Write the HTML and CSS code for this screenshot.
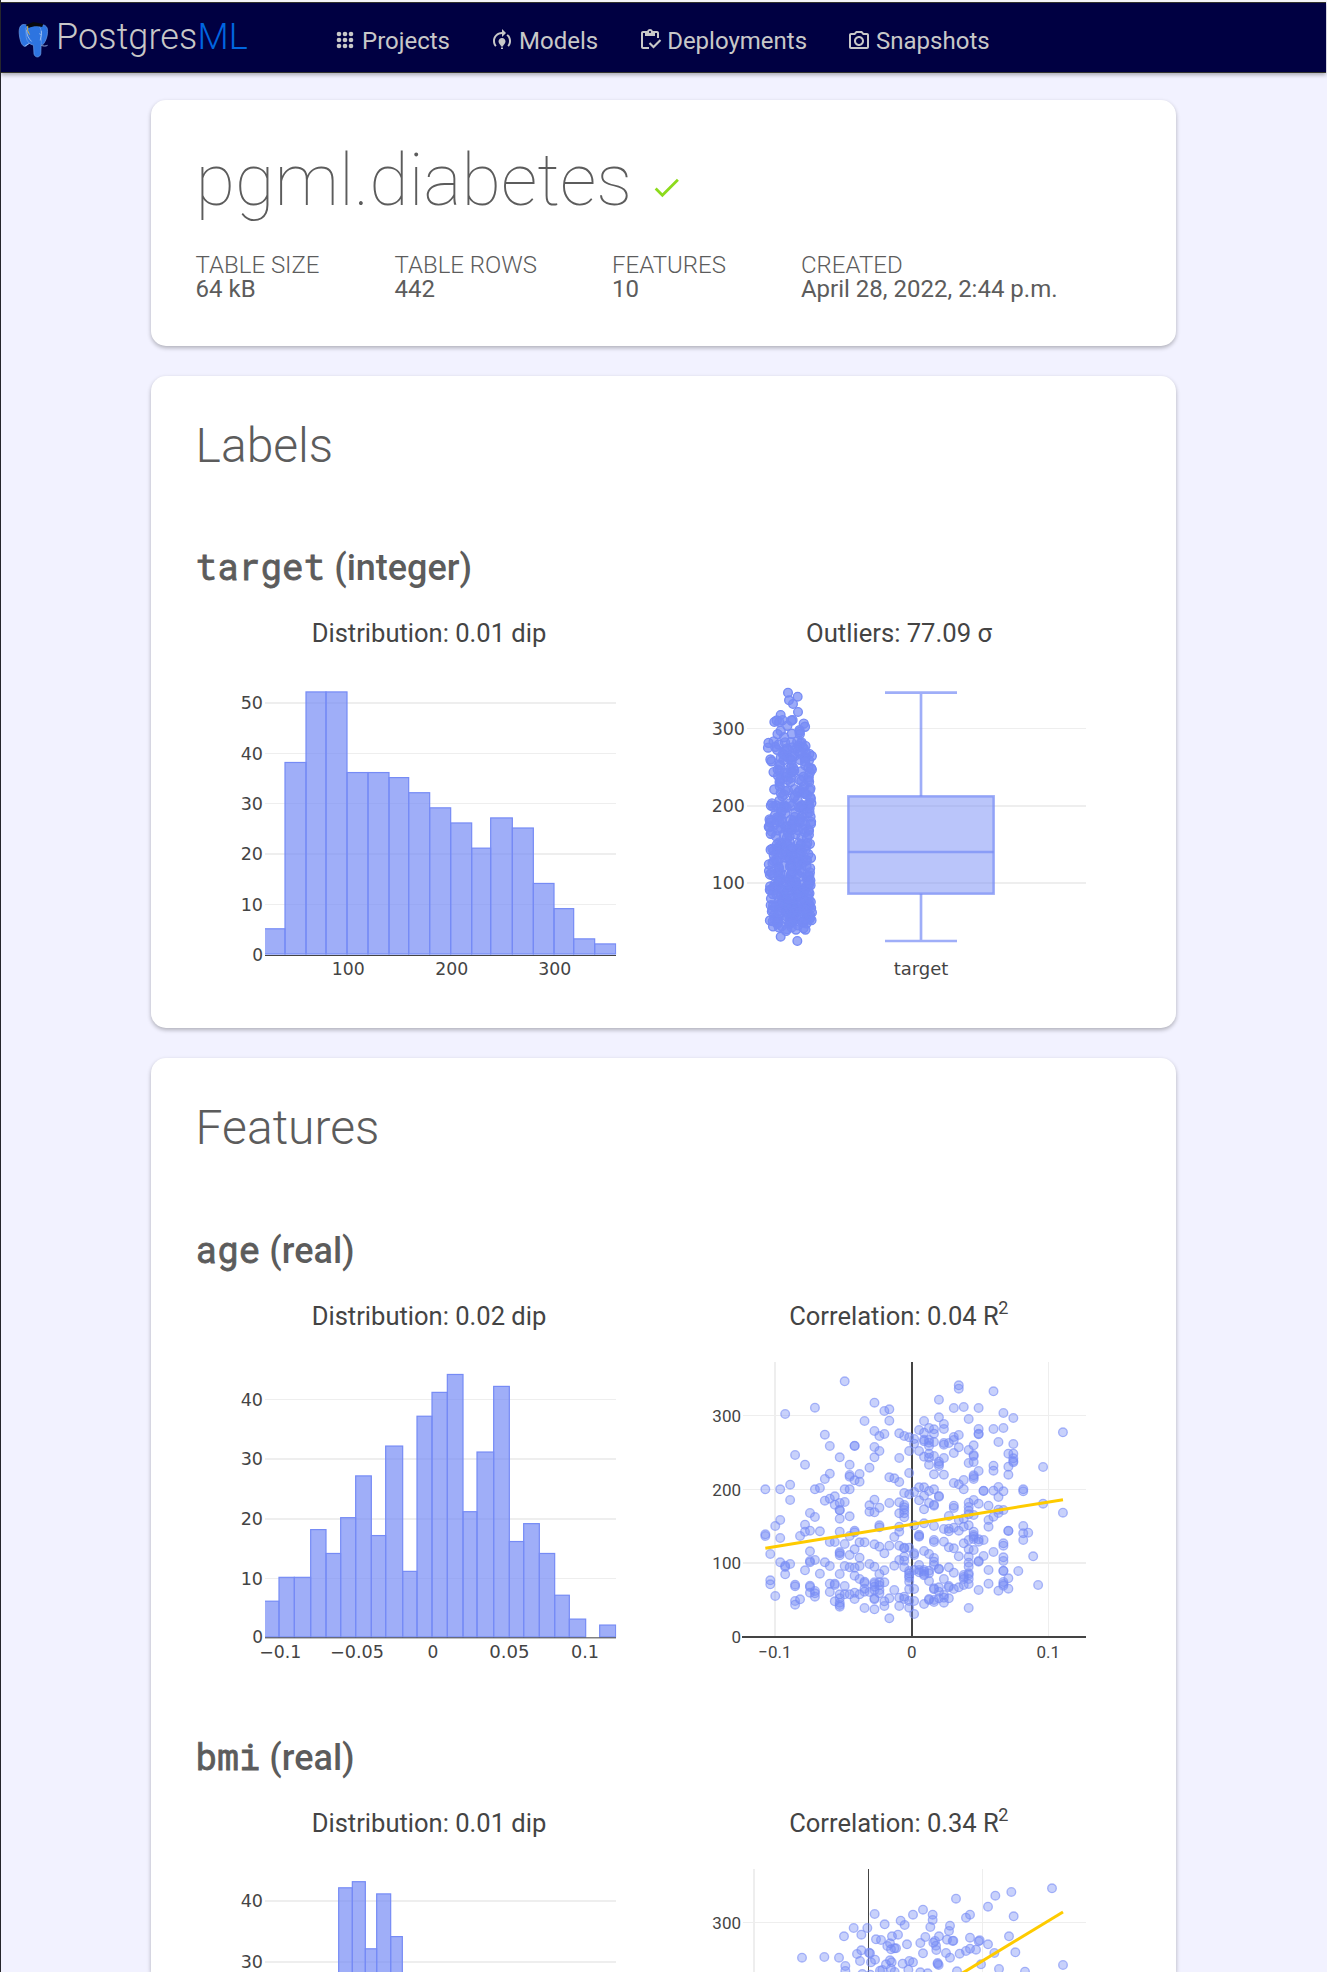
FILE: index.html
```html
<!DOCTYPE html>
<html lang="en">
<head>
<meta charset="utf-8">
<title>pgml.diabetes – PostgresML</title>
<link rel="stylesheet" href="styles.css">
</head>
<body>
<header class="navbar">
  <a class="brand">
    <svg class="brand-logo" viewBox="0 0 32 38">
      <path class="ear" d="M9 4C3 2 1 6 1.200 12c.4 6 2 13 5.300 14 2 .6 4-2 5-4l2-13z"/>
      <path class="ear" d="M22 4c5-1 9 1 8.500 7 0 5-2 10-4.500 13-2 1-4-2-5-5z"/>
      <path class="head" d="M8 7c3-3 12-4 15 0 2 4 1 10 1 15l-.5 12c-1 4-6 4-7 0l-.5-9c-4-1-7-4-7.500-8z"/>
      <path class="outline" d="M24 25c2 1 5 1 6.500 0M12 23c-2 1-4 2-5 3M9 9c0 6 2 9 5 12M24 10c1 4-1 6-1 10M22 13l2 1"/>
      <path class="cap" d="M8 4l8-3 10 2-1 3c-4-1-10-1-14 1z"/>
      <path class="tassel" d="M10 5v5l2 4"/>
    </svg>
    <span class="brand-name">Postgres<span class="brand-ml">ML</span></span>
  </a>
  <nav class="menu">
    <a class="menu-item"><svg class="icon" viewBox="0 0 24 24"><g><circle cx="6" cy="6" r="2.300"/><circle cx="12" cy="6" r="2.300"/><circle cx="18" cy="6" r="2.300"/><circle cx="6" cy="12" r="2.300"/><circle cx="12" cy="12" r="2.300"/><circle cx="18" cy="12" r="2.300"/><circle cx="6" cy="18" r="2.300"/><circle cx="12" cy="18" r="2.300"/><circle cx="18" cy="18" r="2.300"/></g></svg><span>Projects</span></a>
    <a class="menu-item"><svg class="icon" viewBox="0 0 24 24"><path d="M15.500 13.500c0 2-2.500 3.500-2.500 5h-2c0-1.500-2.500-3-2.500-5 0-1.930 1.570-3.500 3.500-3.500s3.500 1.570 3.500 3.500zM13 19.500h-2V21h2zM19 13c0 1.680-.59 3.230-1.580 4.450l1.420 1.420C20.180 17.270 21 15.230 21 13c0-2.740-1.230-5.190-3.160-6.840l-1.420 1.420C17.990 8.860 19 10.820 19 13zM16 5l-4-4v3c-4.970 0-9 4.030-9 9 0 2.230.82 4.270 2.160 5.870l1.420-1.420C5.590 16.230 5 14.680 5 13c0-3.860 3.140-7 7-7v3z"/></svg><span>Models</span></a>
    <a class="menu-item"><svg class="icon" viewBox="0 0 24 24"><path d="M5 5h2v3h10V5h2v5h2V5c0-1.100-.9-2-2-2h-4.180C14.400 1.840 13.300 1 12 1S9.600 1.840 9.180 3H5c-1.100 0-2 .9-2 2v14c0 1.100.9 2 2 2h6v-2H5zm7-2c.55 0 1 .45 1 1s-.45 1-1 1-1-.45-1-1 .45-1 1-1z"/><path d="M21.750 11.250L15.510 17.500l-3.260-3.250-1.500 1.510 4.760 4.740 7.740-7.740z"/></svg><span>Deployments</span></a>
    <a class="menu-item"><svg class="icon" viewBox="0 -1 24 24"><path d="M14.120 4l1.830 2H20v12H4V6h4.050l1.830-2h4.240M15 2H9L7.170 4H4c-1.100 0-2 .9-2 2v12c0 1.100.9 2 2 2h16c1.100 0 2-.9 2-2V6c0-1.100-.9-2-2-2h-3.170L15 2zm-3 7c1.650 0 3 1.350 3 3s-1.350 3-3 3-3-1.350-3-3 1.350-3 3-3m0-2c-2.760 0-5 2.240-5 5s2.240 5 5 5 5-2.240 5-5-2.240-5-5-5z"/></svg><span>Snapshots</span></a>
  </nav>
</header>
<main class="page">
  <section class="card summary">
    <h1 class="title"><span>pgml.diabetes</span><svg class="status" viewBox="0 0 24 24"><path d="M9 16.170L4.830 12l-1.420 1.410L9 19 21 7l-1.410-1.410z"/></svg></h1>
    <dl class="stats">
      <div><dt>TABLE SIZE</dt><dd>64 kB</dd></div>
      <div><dt>TABLE ROWS</dt><dd>442</dd></div>
      <div><dt>FEATURES</dt><dd>10</dd></div>
      <div><dt>CREATED</dt><dd>April 28, 2022, 2:44 p.m.</dd></div>
    </dl>
  </section>
  <section class="card labels">
    <h2>Labels</h2>
    <article class="column-block">
      <h3><code>target</code> (integer)</h3>
      <div class="charts">
        <svg class="chart" id="target-hist"></svg>
        <svg class="chart" id="target-box"></svg>
      </div>
    </article>
  </section>
  <section class="card features">
    <h2>Features</h2>
    <article class="column-block">
      <h3><code>age</code> (real)</h3>
      <div class="charts">
        <svg class="chart" id="age-hist"></svg>
        <svg class="chart" id="age-scatter"></svg>
      </div>
    </article>
    <article class="column-block">
      <h3><code>bmi</code> (real)</h3>
      <div class="charts">
        <svg class="chart" id="bmi-hist"></svg>
        <svg class="chart" id="bmi-scatter"></svg>
      </div>
    </article>
  </section>
</main>
<script src="charts.js"></script>
</body>
</html>
```
FILE: styles.css
```css
* { box-sizing: border-box; }
body {
  margin: 0;
  height: 1972px;
  overflow: hidden;
  background: #f2f2ff;
  border-left: 1px solid #26262c;
  font-family: Roboto, "Liberation Sans", sans-serif;
  color: #5c5c5c;
}
.navbar {
  display: flex;
  height: 71px;
  margin: 2px 1px 0 0;
  background: #000042;
  border-top: 1px solid #33332e;
  border-bottom: 1px solid #33332e;
  box-shadow: 0 -2px 0 #f4f4f8, 0 2px 4px rgba(0, 0, 0, .3);
  color: #c8c8c8;
}
.brand { display: flex; padding: 18px 0 0 17px; width: 332px; }
.brand-logo { width: 31px; height: 37px; margin-right: 7px; }
.ear, .head { fill: #2d74e0; stroke: #6e9fe8; stroke-width: .7; }
.outline { fill: none; stroke: #a4c2f0; stroke-width: .9; }
.cap { fill: #08080c; }
.tassel { fill: none; stroke: #d8b040; stroke-width: 1; }
.brand-name { font-size: 36px; font-weight: 300; line-height: 42px; margin-top: -5px; letter-spacing: .1px; }
.brand-ml { color: #0066e0; }
.menu { display: flex; gap: 40px; padding-top: 24px; }
.menu-item { display: flex; gap: 5px; font-size: 24px; line-height: 28px; }
.icon { width: 24px; height: 24px; margin-top: 1px; fill: currentColor; }
.page { display: flex; flex-direction: column; gap: 30px; width: 1025px; margin: 27px 0 0 150px; }
.card { background: #fff; border-radius: 15px; padding: 0 46px 0 44px; box-shadow: 0 2px 4px rgba(0, 0, 0, .28); }
.summary { height: 246px; }
.labels { height: 652px; }
.features { height: 914px; overflow: hidden; border-radius: 15px 15px 0 0; }
h1, h2, h3, dl, dd { margin: 0; font-weight: 400; }
h1, h2, h3, .stats { padding-left: .6px; }
.title { display: flex; font-size: 72px; font-weight: 100; line-height: 84px; padding-top: 39px; height: 139px; }
.status { width: 33px; height: 33px; margin: 32px 0 0 18px; fill: #8ddb1c; }
.stats { display: flex; gap: 75px; padding-top: 14px; font-size: 24px; line-height: 24px; }
dt { font-weight: 300; }
h2 { font-size: 48px; font-weight: 300; line-height: 56px; padding-top: 42px; height: 98px; }
.column-block { height: 507px; padding-top: 73px; }
.features .column-block { padding-top: 74px; }
h3 { font-size: 36px; font-weight: 500; line-height: 42px; height: 59px; white-space: pre; }
.features h3 { height: 58px; }
h3 code { font-family: "Roboto Mono", "DejaVu Sans Mono", monospace; font-size: 36px; font-weight: 400; line-height: 30px; -webkit-text-stroke: .8px #5c5c5c; }
.charts { display: grid; grid-template-columns: 467px 468px; }
.chart { display: block; width: 467px; height: 384px; overflow: hidden; }

.heading { font: 78px Roboto, sans-serif; fill: #444; text-anchor: middle; }
.tick { font: 51px "DejaVu Sans", sans-serif; fill: #444; }
.tick.plain { font: 51px Roboto, sans-serif; }
.grid { fill: #eee; }
.zero { fill: #444; }
.bar { fill: #768bf5; fill-opacity: .7; stroke: #768bf5; stroke-width: 3.600; }
.dot { fill: #768bf5; fill-opacity: .4; stroke: #768bf5; stroke-opacity: .6; stroke-width: 4; }
.jitter { fill: #768bf5; fill-opacity: .72; stroke: #768bf5; stroke-width: 4; }
.box { fill: #768bf5; fill-opacity: .5; stroke: #768bf5; stroke-opacity: .7; stroke-width: 7.500; }
.whisker { fill: none; stroke: #768bf5; stroke-opacity: .7; stroke-width: 8; }
.trend { stroke: #fecb00; stroke-width: 9; }
```
FILE: charts.js
```js
// Charts are drawn on a grid of thirds of a pixel.
const tag = (name, cls, attrs, text = '') =>
  `<${name} class="${cls}" ${Object.entries(attrs).map(([k, v]) => `${k}="${v}"`).join(' ')}>${text}</${name}>`;
const rect = (cls, x1, y1, x2, y2) => tag('rect', cls, { x: x1, y: y1, width: x2 - x1, height: y2 - y1 });
const text = (cls, x, y, label, anchor, length) =>
  tag('text', cls, Object.assign({ x, y, 'text-anchor': anchor }, length ? { textLength: length, lengthAdjust: 'spacingAndGlyphs' } : {}), label);
const circle = (cls, x, y, r) => tag('circle', cls, { cx: x, cy: y, r });

function draw(id, dx, dy, parts) {
  document.getElementById(id).innerHTML =
    `<g transform="translate(${dx} ${dy}) scale(${1 / 3})">${parts.join('')}</g>`;
}

function histogram(id, dy, o) {
  const parts = [text('heading', 747, o.headingY, o.heading, 'middle', 704)];
  o.grid.forEach(([v, y, h]) => {
    parts.push(rect('grid', 255, y - h / 2, 1308, y + h / 2));
    parts.push(text('tick', 249, y + 18, v, 'end', 67));
  });
  let bars = '';
  o.bars.forEach((v, i) => {
    if (v) bars += rect('bar', o.edges[i], o.base - v * o.unit, o.edges[i + 1], o.base);
  });
  parts.push(`<clipPath id="${id}-clip"><rect x="255" y="400" width="1054" height="1000"/></clipPath>`);
  parts.push(`<g clip-path="url(#${id}-clip)">${bars}</g>`);
  if (o.axis) {
    parts.push(rect('zero', 255, o.axis, 1308, o.axis + 3));
    parts.push(text('tick', 249, o.axis + 18, '0', 'end'));
  }
  (o.ticks || []).forEach(([x, label, w]) => parts.push(text('tick', x, o.tickY, label, 'middle', w)));
  draw(id, -15, dy, parts);
}

histogram('target-hist', -76, {
  heading: 'Distribution: 0.01 dip', headingY: 335,
  grid: [[50, 519, 6], [40, 670.5, 3], [30, 820.5, 3], [20, 972, 6], [10, 1123.5, 3]],
  edges: [253, 315, 378, 438, 501, 564, 627, 686, 749, 812, 875, 932, 997, 1060, 1122, 1181, 1244, 1307],
  bars: [5, 38, 52, 52, 36, 36, 35, 32, 29, 26, 21, 27, 25, 14, 9, 3, 2],
  base: 1272, unit: 15.12, axis: 1275, tickY: 1334,
  ticks: [[505, '100', 99], [815, '200', 99], [1124, '300', 99]]
});

histogram('age-hist', -78, {
  heading: 'Distribution: 0.02 dip', headingY: 345,
  grid: [[40, 568.5, 3], [30, 747, 6], [20, 927, 6], [10, 1105.5, 3]],
  edges: [253, 297, 343, 392, 438, 482, 527, 574, 617, 668, 711, 756, 802, 849, 891, 941, 988, 1031, 1078, 1124, 1168, 1217, 1259, 1307],
  bars: [6, 10, 10, 18, 14, 20, 27, 17, 32, 11, 37, 41, 44, 21, 31, 42, 16, 19, 14, 7, 3, 0, 2],
  base: 1281, unit: 17.9, axis: 1282, tickY: 1344,
  ticks: [[301, '−0.1', 126], [531, '−0.05', 162], [759, '0'], [988, '0.05', 121], [1215, '0.1', 84]]
});

histogram('bmi-hist', -85, {
  heading: 'Distribution: 0.01 dip', headingY: 365,
  grid: [[40, 573, 6], [30, 756, 6]],
  edges: [476, 517, 556, 590, 632, 667],
  bars: [42, 43, 32, 41, 34],
  base: 1302, unit: 18.3
});

// One row per age: vertical positions of the patients of that age.
const byAge = [
  [628,763,768],[822,901,913],[738,948],[628,720,774,847],[402,857,861,883],[614,660,852],
  [525,914,919,963,974],[768,958],[554,734,755,871],[699,752,814,843,847,917,921,938],
  [383,628,711,840,933,940,950],[624,754,881],[464,597,662,847],[498,581,656,786,858,911,936],
  [649,674,786,911,915,964],[532,669,690,691,716,755,816,820,826,882,943,955,968,975,980],
  [304,628,666,792,858,918,943],[554,585,590,628,709,768,825,862,943],
  [497,498,601,752,757,808,863,887,938,957],[582,605,787,833,858,897,943],
  [423,787,905,909,926,935,984],[563,676,695,852,936],
  [368,453,501,532,659,697,793,860,907,912,920,930,955,958,988],
  [468,513,683,736,742,800,882,907,916,930,940],[393,462,820,871,907,964,978],
  [388,422,592,669,797,955,1015],[595,771,857,930],[460,534,606,667,700,740,755,797,840,953,978],
  [468,639,675,682,690,700,712,805,803,830,842,862,950,957],
  [472,513,579,643,803,873,880,888,893,905,927,963,983],
  [477,491,636,736,820,825,870,927,963,1002],[450,513,622,661,764,768,770,855,870,877],
  [423,458,479,484,530,622,647,688,730,813,870,875,882,886,972],
  [444,480,488,498,521,533,554,633,669,822,872,880,903,957,960],
  [448,461,486,528,583,628,674,677,738,780,786,834,845,855,925,928,960,966],
  [359,412,545,552,558,648,650,866,868,922,935,955],
  [432,447,489,494,534,584,747,785,897,945,953,968],[489,708,746,754,802,862,918,922,955],
  [384,471,480,519,609,677,684,743,805,878,927],[316,326,465,502,613,720,752,829,922],
  [381,600,628,716,740,790,885,891,897,915],
  [417,510,549,668,681,692,703,736,780,808,830,848,860,880,885,897,912,984],
  [496,525,528,546,586,591,597,660,705,755,765,770,777,810],
  [384,447,461,463,573,671,778,785,845,843,930],[632,633,780,828],[677,720,740,870,911],
  [334,447,557,572,632,710,816],[486,621,651,689,699,932],
  [399,444,634,690,790,797,832,843,872,873,906,912,917],[521,560,584,752,753,895,926],
  [414,492,521,535,543,547],[873],[628,634,738,760,780],[758],[829],[915],[561,671],[],[],[],[457,698]
];

const bmiPoints = [
  [554,402],[584,433],[491,444],[532,444],[514,464],[462,469],[632,422],[644,435],[669,404],[699,389],
  [728,404],[728,420],[721,441],[798,356],[916,347],[964,336],[1086,325],[894,380],[971,409],[828,413],
  [840,404],[780,437],[777,453],[747,469],[706,471],[624,464],[606,469],[558,478],[573,480],[600,490],
  [592,498],[603,508],[618,505],[613,505],[651,493],[691,489],[730,488],[735,483],[738,497],[739,510],
  [771,479],[788,483],[790,482],[840,473],[866,484],[869,481],[894,493],[957,469],[913,519],[976,517],
  [858,509],[840,506],[828,513],[809,521],[768,519],[780,533],[699,520],[336,533],[403,531],[447,533],
  [514,511],[501,522],[510,543],[537,518],[540,520],[543,547],[555,539],[466,558],[466,573],[600,541],
  [605,547],[588,553],[603,566],[570,572],[577,570],[614,576],[638,551],[658,543],[669,547],[655,569],
  [743,549],[743,552],[746,555],[691,577],[713,580],[801,574],[873,553],[927,567],[1005,575],[1119,555],
  [517,582],[541,584]
];

function scatter(id, dy, o) {
  const parts = [
    text('heading', 612, o.headingY, o.heading, 'middle', 629),
    text('heading', 940, o.headingY - 33, '<tspan font-size="54">2</tspan>', 'middle')
  ];
  o.vertical.forEach(([x, w]) => parts.push(rect('grid', x - w / 2, o.top, x + w / 2, o.bottom)));
  o.horizontal.forEach(([y, h, label]) => {
    parts.push(rect('grid', 159, y - h / 2, 1188, y + h / 2));
    parts.push(text('tick plain', 153, y + 19, label, 'end'));
  });
  parts.push(rect('zero', o.zero[0], o.top, o.zero[1], o.bottom));
  if (o.ticks) {
    parts.push(rect('zero', 156, 1068, 1188, 1074));
    parts.push(text('tick plain', 153, 1089, '0', 'end'));
    o.ticks.forEach(([x, label]) => parts.push(text('tick plain', x, 1134, label, 'middle')));
  }
  o.points.forEach(([x, y]) => parts.push(circle('dot', x, y, 13)));
  const [x1, y1, x2, y2] = o.trend;
  parts.push(tag('line', 'trend', { x1, y1, x2, y2 }));
  draw(id, 28, dy, parts);
}

const agePoints = byAge.flatMap((ys, i) => ys.map(y => [226 + 14.88 * i, y]));

scatter('age-scatter', -8, {
  heading: 'Correlation: 0.04 R', headingY: 134, top: 246, bottom: 1071,
  vertical: [[255, 6], [1075.5, 3]], horizontal: [[406.5, 3, 300], [628.5, 3, 200], [849, 6, 100]],
  zero: [663, 669], ticks: [[255, '−0.1'], [665, '0'], [1075, '0.1']],
  points: agePoints, trend: [226, 805, 1119, 659]
});

scatter('bmi-scatter', -15, {
  heading: 'Correlation: 0.34 R', headingY: 155, top: 267, bottom: 1092,
  vertical: [[192, 6], [877.5, 3]], horizontal: [[427.5, 3, 300]],
  zero: [534, 537], points: bmiPoints, trend: [760, 614, 1119, 396]
});

// Box plot with every patient's target value scattered beside it.
function boxPlot() {
  const parts = [text('heading', 627, 125, 'Outliers: 77.09 σ', 'middle', 558)];
  [[385.5, 3, 300], [618, 6, 200], [849, 6, 100]].forEach(([y, h, label]) => {
    parts.push(rect('grid', 171, y - h / 2, 1188, y + h / 2));
    parts.push(text('tick', 165, y + 18, label, 'end', 100));
  });
  parts.push(rect('box', 475, 589, 911, 881));
  parts.push(tag('path', 'whisker', { d: 'M475 756H911M693 589V278M693 881V1023M585 278H801M585 1023H801' }));
  const extremes = [[294,278],[323,290],[297,301],[309,312],[324,336],[272,345],[253,366],[308,360],[272,1010],[322,1023]];
  extremes.forEach(([x, y]) => parts.push(circle('jitter', x, y, 13)));
  agePoints.map(p => p[1]).sort((a, b) => a - b).forEach((y, i) => {
    const value = (1071 - y) / 2.215;
    if (value > 311 || value < 36) return;
    const spread = value > 285 || value < 43 ? 48 : 66;
    const x = 300 + (Math.pow((i * 0.6180339 + Math.sin(i * i) * .12 + 1) % 1, .85) * 2 - 1) * spread;
    parts.push(circle('jitter', x.toFixed(1), (385 + (300 - value) * 2.315).toFixed(1), 13.5));
  });
  parts.push(text('tick', 693, 1124, 'target', 'middle', 164));
  draw('target-box', 28, -6, parts);
}
boxPlot();
```
